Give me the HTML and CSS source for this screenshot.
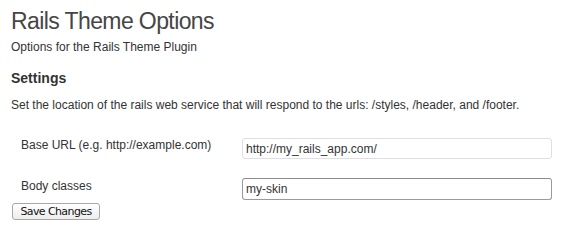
FILE: index.html
```html
<!DOCTYPE html>
<html>
<head>
<meta charset="utf-8">
<title>Rails Theme Options</title>
<link rel="stylesheet" href="styles.css">
</head>
<body>
<div class="wrap">
  <h1 class="title">Rails Theme Options</h1>
  <p class="subtitle">Options for the Rails Theme Plugin</p>
  <h2 class="section">Settings</h2>
  <p class="desc">Set the location of the rails web service that will respond to the urls: /styles, /header, and /footer.</p>
  <form class="form">
    <div class="row row-first">
      <label class="label" for="base">Base URL (e.g. http://example.com)</label>
      <input class="field" id="base" type="text" value="http://my_rails_app.com/">
    </div>
    <div class="row row-second">
      <label class="label label-second" for="body">Body classes</label>
      <input class="field field-focus" id="body" type="text" value="my-skin">
    </div>
    <button class="btn" type="button">Save Changes</button>
  </form>
</div>
</body>
</html>
```

FILE: styles.css
```css
html, body {
  margin: 0;
  padding: 0;
  background: #ffffff;
}
body {
  font-family: "Liberation Sans", Arial, Helvetica, sans-serif;
  font-size: 12px;
  color: #333333;
}
.wrap {
  padding-left: 11px;
  padding-top: 8px;
}
.title {
  margin: 0;
  font-size: 23px;
  line-height: 26px;
  font-weight: normal;
  color: #464646;
  letter-spacing: -0.6px;
}
.subtitle {
  margin: 6px 0 0;
  line-height: 15px;
}
.section {
  margin: 14px 0 0;
  font-size: 14px;
  line-height: 18px;
  font-weight: bold;
  color: #333333;
}
.desc {
  margin: 11px 0 0;
  line-height: 15px;
}
.form {
  margin: 0;
}
.row {
  display: flex;
  align-items: flex-start;
  padding-left: 10px;
}
.row-first {
  margin-top: 25px;
}
.row-second {
  margin-top: 19px;
}
.label {
  width: 221px;
  flex: none;
  line-height: 15px;
}
.label-second {
  padding-top: 1px;
}
.field {
  box-sizing: border-box;
  width: 310px;
  height: 21px;
  margin: 0;
  padding: 0 3px;
  border: 1px solid #dfdfdf;
  border-radius: 3px;
  background: #ffffff;
  font-family: "Liberation Sans", Arial, Helvetica, sans-serif;
  font-size: 12px;
  color: #333333;
  outline: none;
}
.field-focus {
  height: 22px;
  border-color: #9a9a9a;
  border-top-color: #8c8c8c;
}
.btn {
  display: block;
  box-sizing: border-box;
  margin: 3px 0 0 1px;
  width: 88px;
  height: 17px;
  padding: 0;
  border: 1px solid #a8a8a8;
  border-radius: 3px;
  background: linear-gradient(#ffffff, #ededed);
  font-family: "DejaVu Sans", Verdana, sans-serif;
  font-size: 11px;
  letter-spacing: -0.6px;
  line-height: 15px;
  color: #111111;
}
```
